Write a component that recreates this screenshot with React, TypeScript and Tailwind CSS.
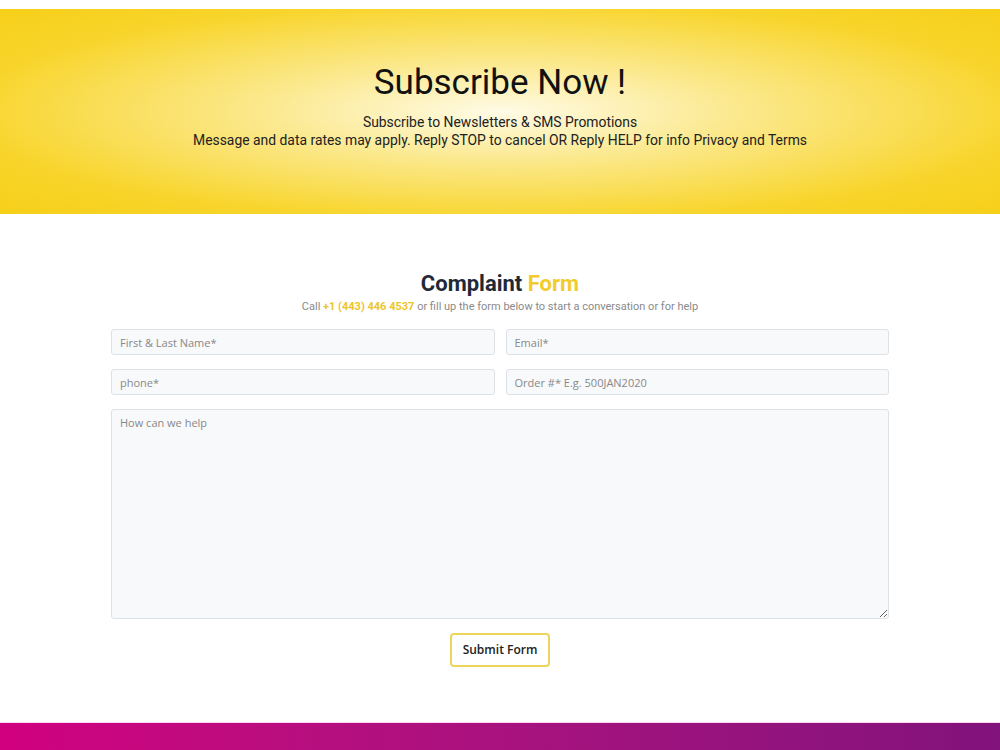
import React from "react";

const field =
  "h-[26px] px-[8px] text-[11px] bg-[#f8f9fa] border border-[#dee2e6] rounded-[3px] placeholder:text-[#888] outline-none";

export default function App() {
  return (
    <div className="min-h-[750px] bg-white flex flex-col" style={{ fontFamily: "Roboto, 'Liberation Sans', sans-serif" }}>
      <div className="h-[9px] bg-white" />
      {/* Subscribe banner */}
      <section className="h-[205px] flex flex-col items-center bg-[radial-gradient(ellipse_at_center,#fffbe6_0%,#fbe88a_35%,#f8d52c_75%,#f6cf18_100%)]">
        <h1 className="mt-[52px] text-[35px] leading-[44px] text-[#111] font-normal">Subscribe Now !</h1>
        <p className="mt-[8px] text-[13.9px] leading-[18px] text-[#222]">Subscribe to Newsletters &amp; SMS Promotions</p>
        <p className="text-[13.9px] leading-[18px] text-[#222]">Message and data rates may apply. Reply STOP to cancel OR Reply HELP for info Privacy and Terms</p>
      </section>

      {/* Complaint form */}
      <section className="flex flex-col items-center pt-[55px]">
        <h2 className="text-[22px] leading-[30px] font-bold text-[#1f2937]">
          Complaint <span className="text-[#f2cc2c]">Form</span>
        </h2>
        <p className="text-[11px] leading-[16px] text-[#8a8a8a]">
          Call <span className="font-bold text-[#ecc52b]">+1 (443) 446 4537</span> or fill up the form below to start a conversation or for help
        </p>
        <form className="w-[778px] mt-[14px] flex flex-col gap-[14px]" style={{ fontFamily: "'Open Sans', 'Noto Sans', sans-serif" }}>
          <div className="grid grid-cols-2 gap-[11px]">
            <input placeholder="First & Last Name*" className={field} />
            <input placeholder="Email*" className={field} />
          </div>
          <div className="grid grid-cols-2 gap-[11px]">
            <input placeholder="phone*" className={field} />
            <input placeholder="Order #* E.g. 500JAN2020" className={field} />
          </div>
          <textarea
            placeholder="How can we help"
            className="h-[210px] px-[8px] py-[5px] text-[11px] bg-[#f8f9fa] border border-[#dee2e6] rounded-[3px] placeholder:text-[#888] outline-none"
          />
          <div className="flex justify-center">
            <button type="button" className="w-[100px] h-[34px] border-2 border-[#ecd55a] rounded-[4px] bg-white text-[12px] font-semibold text-[#222]">
              Submit Form
            </button>
          </div>
        </form>
      </section>
      <div className="flex-1" />
      <footer className="h-[28px] bg-gradient-to-r from-[#d1007f] to-[#82127c] border-t border-[#ffd6f0]" />
    </div>
  );
}
